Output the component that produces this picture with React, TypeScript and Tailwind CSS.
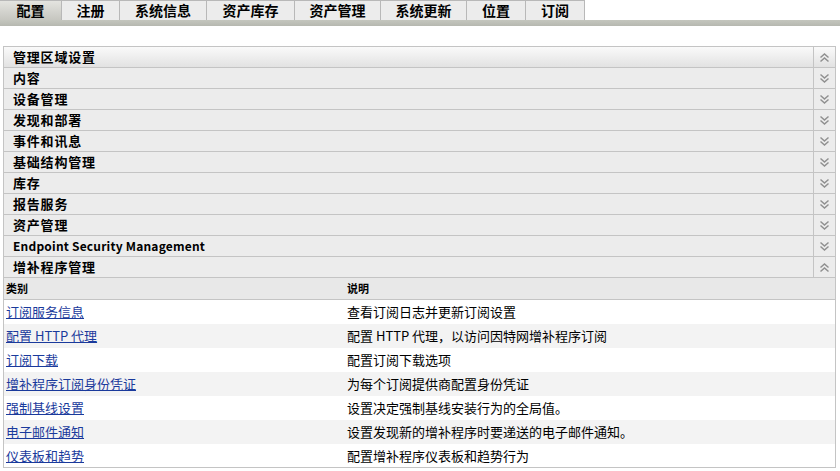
import React from 'react'

const tabs = [
  { label: '配置', w: 'w-[62px]', active: true },
  { label: '注册', w: 'w-[58px]' },
  { label: '系统信息', w: 'w-[87px]' },
  { label: '资产库存', w: 'w-[88px]' },
  { label: '资产管理', w: 'w-[86px]' },
  { label: '系统更新', w: 'w-[86px]' },
  { label: '位置', w: 'w-[59px]' },
  { label: '订阅', w: 'w-[59px]' },
]

const sections = [
  '内容',
  '设备管理',
  '发现和部署',
  '事件和讯息',
  '基础结构管理',
  '库存',
  '报告服务',
  '资产管理',
  'Endpoint Security Management',
]

const rows = [
  ['订阅服务信息', '查看订阅日志并更新订阅设置'],
  ['配置 HTTP 代理', '配置 HTTP 代理，以访问因特网增补程序订阅'],
  ['订阅下载', '配置订阅下载选项'],
  ['增补程序订阅身份凭证', '为每个订阅提供商配置身份凭证'],
  ['强制基线设置', '设置决定强制基线安装行为的全局值。'],
  ['电子邮件通知', '设置发现新的增补程序时要递送的电子邮件通知。'],
  ['仪表板和趋势', '配置增补程序仪表板和趋势行为'],
]

function Chevrons({ up }: { up?: boolean }) {
  return (
    <svg width="11" height="11" viewBox="0 0 11 11" className={up ? 'rotate-180' : ''}>
      <path d="M1.5 1.5 L5.5 5 L9.5 1.5" fill="none" stroke="#909090" strokeWidth="1.5" />
      <path d="M1.5 5.5 L5.5 9 L9.5 5.5" fill="none" stroke="#909090" strokeWidth="1.5" />
    </svg>
  )
}

function SectionRow({ label, up, head }: { label: string; up?: boolean; head?: boolean }) {
  const latin = /^[A-Za-z ]+$/.test(label)
  return (
    <div className={`flex h-[21px] border-b border-[#c4c4c4] ${head ? 'bg-gradient-to-b from-[#fafafa] to-[#e2e2e2]' : 'bg-[#ececec]'}`}>
      <div className={`flex-1 flex items-center pl-[9px] font-bold text-black ${latin ? 'text-[12px] tracking-[0.2px]' : 'text-[13px] tracking-[0.8px]'}`}>{label}</div>
      <div className="w-[22px] flex items-center justify-center border-l border-[#c4c4c4]">
        <Chevrons up={up} />
      </div>
    </div>
  )
}

export default function App() {
  return (
    <div className="w-[840px] h-[471px] bg-white overflow-hidden" style={{ fontFamily: '"Noto Sans CJK SC", "Liberation Sans", sans-serif' }}>
      <div className="flex h-[20px]">
        {tabs.map((t) => (
          <div
            key={t.label}
            className={`${t.w} flex items-center justify-center border-t border-r border-[#b8b8b8] text-[14px] font-bold text-black ${t.active ? 'bg-gradient-to-b from-[#e4e4e0] to-[#c6c6c0]' : 'bg-[#ececec]'}`}
          >
            {t.label}
          </div>
        ))}
      </div>
      <div className="h-[6px] bg-gradient-to-b from-[#c4c6be] to-[#b6b8b0]" />

      <div className="mt-[20px] ml-[3px] w-[833px] border-l border-r border-t border-[#c4c4c4]">
        <SectionRow label="管理区域设置" up head />
        {sections.map((s) => (
          <SectionRow key={s} label={s} />
        ))}
        <SectionRow label="增补程序管理" up />
        <div className="flex h-[22px] items-center bg-[#e8e8e8] border-b border-[#c4c4c4] text-[11px] font-bold text-black">
          <div className="w-[343px] pl-[2px]">类别</div>
          <div>说明</div>
        </div>
        {rows.map(([a, b], i) => (
          <div key={a} className={`flex h-[24px] items-center text-[13px] ${i % 2 ? 'bg-[#f3f3f3]' : 'bg-white'} ${i === rows.length - 1 ? 'border-b border-[#c4c4c4]' : ''}`}>
            <div className="w-[343px] pl-[2px]">
              <a href="#" className="text-[#1a3a9c] underline">{a}</a>
            </div>
            <div className="text-black">{b}</div>
          </div>
        ))}
      </div>
    </div>
  )
}
